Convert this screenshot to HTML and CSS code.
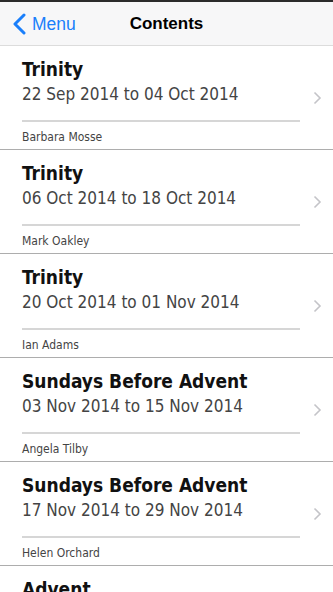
FILE: index.html
```html
<!DOCTYPE html>
<html lang="en">
<head>
    <meta charset="UTF-8">
    <meta name="viewport" content="width=device-width, initial-scale=1.0">
    <title>Contents</title>
    <link rel="stylesheet" href="styles.css">
</head>
<body>
    <div class="navbar">
        <a class="back" href="#">
            <svg width="14" height="22" viewBox="0 0 14 22"><path d="M12 2 L3 11 L12 20" fill="none" stroke="#1a7ffb" stroke-width="3" stroke-linecap="round" stroke-linejoin="round"/></svg>
            <span>Menu</span>
        </a>
        <h1>Contents</h1>
    </div>

    <ul class="contents">
        <li class="entry">
            <div class="entry-body">
                <h2>Trinity</h2>
                <p class="dates">22 Sep 2014 to 04 Oct 2014</p>
                <p class="author">Barbara Mosse</p>
            </div>
            <div class="chevron"><svg width="9" height="14" viewBox="0 0 9 14"><path d="M1.5 1.5 L7 7 L1.5 12.5" fill="none" stroke="#c4c4c8" stroke-width="1.6"/></svg></div>
        </li>
        <li class="entry">
            <div class="entry-body">
                <h2>Trinity</h2>
                <p class="dates">06 Oct 2014 to 18 Oct 2014</p>
                <p class="author">Mark Oakley</p>
            </div>
            <div class="chevron"><svg width="9" height="14" viewBox="0 0 9 14"><path d="M1.5 1.5 L7 7 L1.5 12.5" fill="none" stroke="#c4c4c8" stroke-width="1.6"/></svg></div>
        </li>
        <li class="entry">
            <div class="entry-body">
                <h2>Trinity</h2>
                <p class="dates">20 Oct 2014 to 01 Nov 2014</p>
                <p class="author">Ian Adams</p>
            </div>
            <div class="chevron"><svg width="9" height="14" viewBox="0 0 9 14"><path d="M1.5 1.5 L7 7 L1.5 12.5" fill="none" stroke="#c4c4c8" stroke-width="1.6"/></svg></div>
        </li>
        <li class="entry">
            <div class="entry-body">
                <h2>Sundays Before Advent</h2>
                <p class="dates">03 Nov 2014 to 15 Nov 2014</p>
                <p class="author">Angela Tilby</p>
            </div>
            <div class="chevron"><svg width="9" height="14" viewBox="0 0 9 14"><path d="M1.5 1.5 L7 7 L1.5 12.5" fill="none" stroke="#c4c4c8" stroke-width="1.6"/></svg></div>
        </li>
        <li class="entry">
            <div class="entry-body">
                <h2>Sundays Before Advent</h2>
                <p class="dates">17 Nov 2014 to 29 Nov 2014</p>
                <p class="author">Helen Orchard</p>
            </div>
            <div class="chevron"><svg width="9" height="14" viewBox="0 0 9 14"><path d="M1.5 1.5 L7 7 L1.5 12.5" fill="none" stroke="#c4c4c8" stroke-width="1.6"/></svg></div>
        </li>
        <li class="entry">
            <div class="entry-body">
                <h2>Advent</h2>
            </div>
        </li>
    </ul>
</body>
</html>
```

FILE: styles.css
```css
body {
    margin: 0;
    height: 592px;
    background-color: #fff;
    font-family: "DejaVu Sans Condensed", "DejaVu Sans", sans-serif;
    font-stretch: condensed;
    color: #111;
    overflow: hidden;
}
.navbar {
    position: relative;
    height: 43px;
    border-top: 2px solid #2b2b2b;
    border-bottom: 1px solid #dcdcdc;
    background-color: #f7f7f8;
    display: flex;
    align-items: center;
    justify-content: center;
    font-family: "Liberation Sans", Arial, sans-serif;
    font-stretch: normal;
}
.navbar h1 {
    margin: 0;
    font-size: 17px;
    font-weight: bold;
    color: #000;
}
.back {
    position: absolute;
    left: 12px;
    top: 11px;
    display: flex;
    align-items: center;
    gap: 6px;
    color: #1a7ffb;
    text-decoration: none;
    font-size: 17.5px;
}
.contents {
    list-style: none;
    margin: 0;
    padding: 0;
}
.entry {
    display: flex;
    align-items: center;
    height: 103px;
    border-bottom: 1px solid #adadad;
}
.entry-body {
    flex: 1;
    margin-left: 22px;
    padding-top: 11px;
    align-self: stretch;
}
.entry-body h2 {
    margin: 0;
    font-size: 19px;
    line-height: 24px;
    font-weight: bold;
    color: #111;
}
.dates {
    margin: 2px 0 0;
    font-size: 17px;
    line-height: 22px;
    color: #444;
    padding-bottom: 15px;
    border-bottom: 2px solid #d6d6d6;
}
.author {
    margin: 0;
    padding-top: 7px;
    font-size: 12px;
    line-height: 16px;
    color: #444;
}
.chevron {
    width: 32px;
    display: flex;
    justify-content: center;
    padding-left: 1px;
}
```
